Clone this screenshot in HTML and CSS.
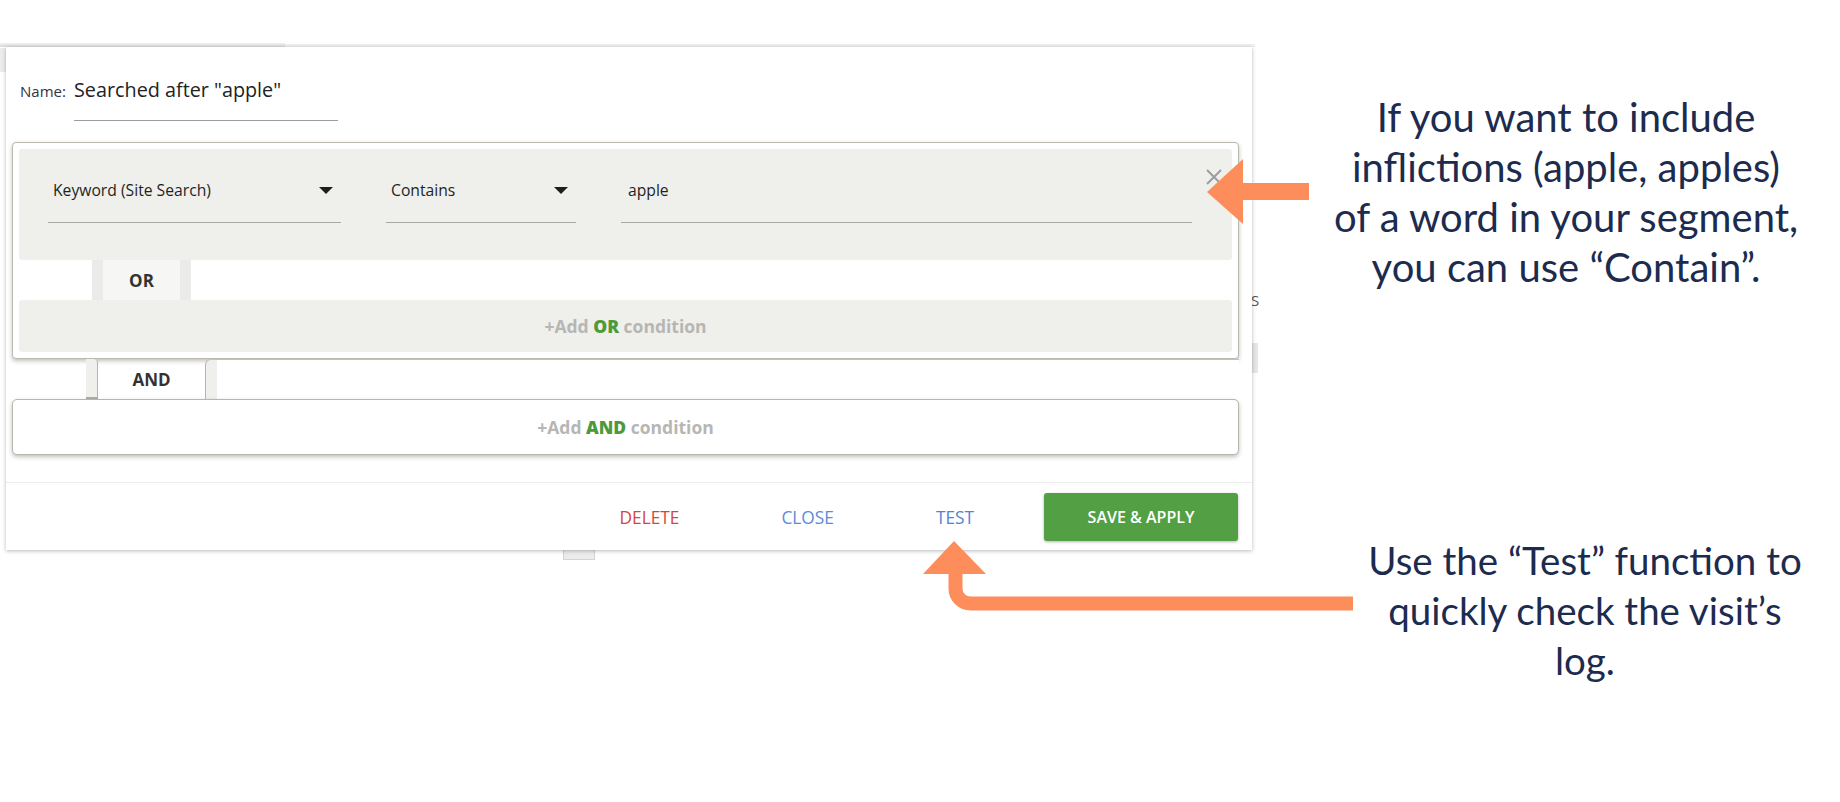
FILE: index.html
```html
<!DOCTYPE html>
<html lang="en">
<head>
    <meta charset="UTF-8">
    <meta name="viewport" content="width=device-width, initial-scale=1.0">
    <title>Segment editor - Contains condition</title>
    <link rel="stylesheet" href="styles.css">
</head>
<body>
    <!-- bits of the page behind the dialog -->
    <div class="behind">
        <div class="behind-strip"></div>
        <div class="behind-strip-light"></div>
        <div class="behind-side"></div>
        <span class="behind-letter">S</span>
        <div class="behind-block"></div>
        <div class="behind-tab"></div>
    </div>

    <main class="slide">
        <section class="modal">
            <div class="name-row">
                <span class="name-label">Name:</span>
                <span class="name-value">Searched after "apple"</span>
            </div>

            <div class="or-group">
                <div class="condition">
                    <div class="fields">
                        <div class="field field-keyword">
                            <span>Keyword (Site Search)</span>
                            <i class="caret"></i>
                        </div>
                        <div class="field field-op">
                            <span>Contains</span>
                            <i class="caret"></i>
                        </div>
                        <div class="field field-value">
                            <span>apple</span>
                        </div>
                    </div>
                    <button class="remove" title="Remove">
                        <svg width="18" height="16" viewBox="0 0 18 16">
                            <path d="M2 1 L16 15 M16 1 L2 15" stroke="#9d9d9d" stroke-width="2" fill="none"/>
                        </svg>
                    </button>
                </div>
                <div class="or-tab">OR</div>
                <div class="add-or"><span>+Add <b>OR</b> condition</span></div>
            </div>

            <div class="and-row">
                <div class="and-stub"></div>
                <div class="and-label">AND</div>
                <div class="and-rest"></div>
            </div>
            <div class="add-and"><span>+Add <b>AND</b> condition</span></div>

            <footer class="modal-footer">
                <button class="link delete">DELETE</button>
                <button class="link close">CLOSE</button>
                <button class="link test">TEST</button>
                <button class="primary">SAVE &amp; APPLY</button>
            </footer>
        </section>

        <aside class="notes">
            <p class="note note-contain">If you want to include<br>inflictions (apple, apples)<br>of a word in your segment,<br>you can use “Contain”.</p>
            <p class="note note-test">Use the “Test” function to<br>quickly check the visit’s<br>log.</p>
        </aside>
    </main>

    <svg class="arrows" width="1840" height="802" viewBox="0 0 1840 802">
        <path class="arrow" d="M1207 192 L1243 159 L1243 183 L1309 183 L1309 200 L1243 200 L1243 224 Z"/>
        <path class="arrow-line" d="M1353 603.5 H970.5 A15 15 0 0 1 955.5 588.5 V572"/>
        <path class="arrow" d="M954 541 L986 574 L923 574 Z"/>
    </svg>
</body>
</html>
```

FILE: styles.css
```css
body {
    margin: 0;
    width: 1840px;
    height: 802px;
    overflow: hidden;
    position: relative;
    background: #fff;
    font-family: "Open Sans", "Noto Sans", sans-serif;
    color: #2b2b2b;
}

/* page behind the dialog */
.behind-strip {
    position: absolute;
    left: 0;
    top: 43px;
    width: 285px;
    height: 4px;
    background: linear-gradient(#f2f2f2, #d8d8d8);
}
.behind-strip-light {
    position: absolute;
    left: 285px;
    top: 44px;
    width: 970px;
    height: 3px;
    background: #efefef;
}
.behind-side {
    position: absolute;
    left: 0;
    top: 48px;
    width: 6px;
    height: 24px;
    background: #ececec;
}
.behind-letter {
    position: absolute;
    left: 1251px;
    top: 290px;
    font-size: 15px;
    color: #555;
}
.behind-block {
    position: absolute;
    left: 1252px;
    top: 343px;
    width: 6px;
    height: 30px;
    background: #e6e6e6;
}
.behind-tab {
    position: absolute;
    left: 563px;
    top: 548px;
    width: 30px;
    height: 10px;
    background: #ececec;
    border: 1px solid #d4d4d4;
}

.slide {
    display: flex;
    align-items: flex-start;
    padding: 47px 0 0 6px;
}

/* dialog */
.modal {
    position: relative;
    z-index: 1;
    width: 1246px;
    height: 503px;
    box-sizing: border-box;
    background: #fff;
    box-shadow: 0 1px 4px rgba(0, 0, 0, 0.28);
    display: flex;
    flex-direction: column;
}

.name-row {
    display: flex;
    align-items: baseline;
    padding: 33px 0 0 14px;
}
.name-label {
    width: 54px;
    font-size: 15px;
    color: #34323f;
}
.name-value {
    width: 264px;
    font-size: 19.8px;
    line-height: 20px;
    padding-bottom: 20px;
    border-bottom: 1px solid #9c9c9c;
    color: #222;
}

.or-group {
    margin: 21px 0 0 6px;
    width: 1227px;
    box-sizing: border-box;
    padding: 6px;
    border: 1px solid #bdb9b1;
    border-radius: 4px;
    background: #fff;
    box-shadow: 0 2px 4px rgba(0, 0, 0, 0.25);
}

.condition {
    display: flex;
    align-items: flex-start;
    padding: 20px 9px 37px 29px;
    background: #efefeb;
    border-radius: 3px;
}
.fields {
    display: flex;
    gap: 45px;
    margin-top: 9px;
}
.field {
    display: flex;
    align-items: center;
    box-sizing: border-box;
    height: 45px;
    padding: 0 8px 20px 5px;
    line-height: 24px;
    font-size: 15.7px;
    border-bottom: 1px solid #a8a8a8;
    color: #1f1f1f;
}
.field-keyword { width: 293px; }
.field-op { width: 190px; }
.field-value { width: 571px; padding-left: 7px; }
.caret {
    margin-left: auto;
    width: 0;
    height: 0;
    border-left: 7px solid transparent;
    border-right: 7px solid transparent;
    border-top: 7px solid #1e1e1e;
}
.remove {
    margin-left: auto;
    padding: 0;
    border: none;
    background: none;
    width: 18px;
    height: 16px;
    cursor: pointer;
}
.remove svg { display: block; }

.or-tab {
    margin-left: 73px;
    width: 99px;
    height: 40px;
    display: flex;
    align-items: center;
    justify-content: center;
    font-size: 17px;
    font-weight: 700;
    color: #333;
    background: linear-gradient(to right, #ebebe9 11px, #f6f6f4 11px, #f6f6f4 88px, #ebebe9 88px);
}

.add-or,
.add-and {
    display: flex;
    align-items: center;
    justify-content: center;
    font-size: 17.5px;
    font-weight: 700;
    color: #b6b6b4;
}
.add-or b,
.add-and b {
    color: #4d9a3c;
}
.add-or {
    height: 52px;
    background: #efefeb;
    border-radius: 3px;
}

.and-row {
    display: flex;
    margin-left: 6px;
    width: 1227px;
    height: 40px;
}
.and-stub {
    margin-left: 74px;
    width: 12px;
    box-sizing: border-box;
    border-right: 1px solid #b9b5ad;
    border-bottom: 2px solid #b2aea6;
    border-top-right-radius: 4px;
    background: #efefeb;
}
.and-label {
    width: 107px;
    display: flex;
    align-items: center;
    justify-content: center;
    font-size: 17px;
    font-weight: 700;
    color: #333;
}
.and-rest {
    flex: 1;
    box-sizing: border-box;
    border-left: 1px solid #b9b5ad;
    border-top: 1px solid #c6c2ba;
    border-top-left-radius: 6px;
    background: linear-gradient(to right, #efefeb 11px, #fff 11px);
}

.add-and {
    margin-left: 6px;
    width: 1227px;
    height: 56px;
    box-sizing: border-box;
    border: 1px solid #b9b5ad;
    border-radius: 5px;
    background: #fff;
    box-shadow: 0 2px 4px rgba(0, 0, 0, 0.25);
}

.modal-footer {
    margin-top: 27px;
    border-top: 1px solid #ececec;
    display: flex;
    justify-content: flex-end;
    align-items: center;
    gap: 30px;
    padding: 10px 14px 9px 0;
}
.link {
    padding: 0 36px;
    border: none;
    background: none;
    font-family: "Open Sans", sans-serif;
    font-size: 17.3px;
    cursor: pointer;
}
.delete { color: #d4463c; }
.close { color: #5b8cd9; }
.test { color: #5282d4; }
.primary {
    margin-left: 4px;
    width: 194px;
    height: 48px;
    border: none;
    border-radius: 3px;
    background: #529f44;
    color: #fff;
    font-family: "Open Sans", sans-serif;
    font-size: 16px;
    font-weight: 600;
    box-shadow: 0 1px 3px rgba(0, 0, 0, 0.3);
    cursor: pointer;
}

/* annotations */
.notes {
    margin-left: 64px;
    width: 500px;
}
.note {
    margin: 0;
    width: 500px;
    font-family: Lato, "Open Sans", sans-serif;
    font-size: 40px;
    line-height: 50px;
    text-align: center;
    color: #1c2b4e;
}
.note-contain {
    margin-top: 45px;
}
.note-test {
    margin-top: 243px;
    margin-left: 19px;
    font-size: 38.5px;
}

.arrows {
    position: absolute;
    left: 0;
    top: 0;
    z-index: 2;
    pointer-events: none;
}
.arrow {
    fill: #fd8e5b;
}
.arrow-line {
    fill: none;
    stroke: #fd8e5b;
    stroke-width: 14;
}
```
